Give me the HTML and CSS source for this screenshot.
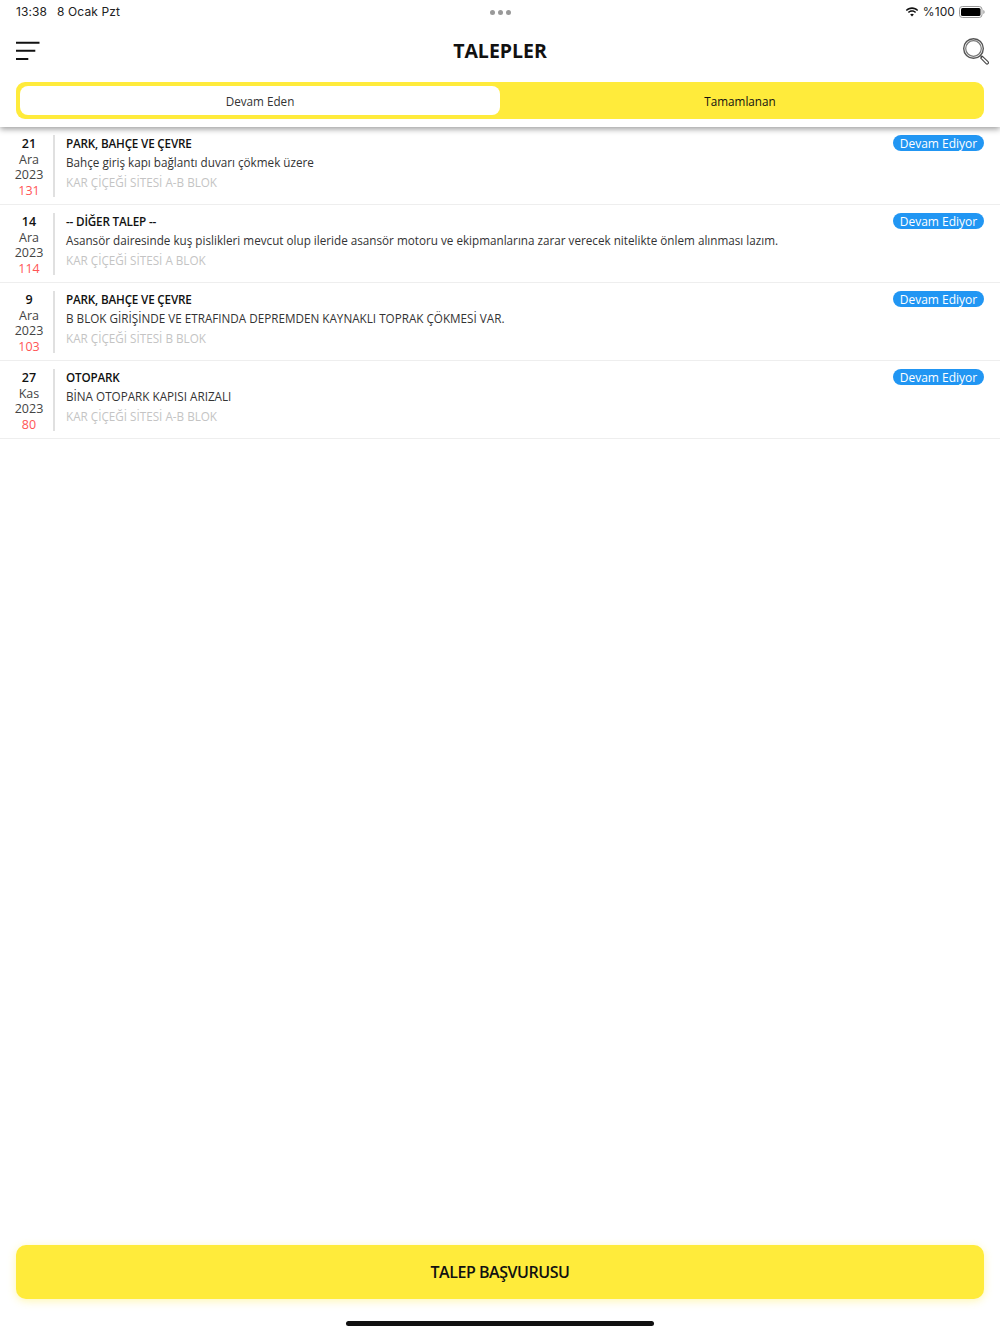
FILE: index.html
```html
<!DOCTYPE html>
<html lang="tr">
<head>
<meta charset="utf-8">
<title>Talepler</title>
<link rel="stylesheet" href="styles.css">
</head>
<body>
<div class="page">
  <div class="top">
    <div class="status">
      <div class="status-left"><span>13:38</span><span>8 Ocak Pzt</span></div>
      <div class="dots"><i></i><i></i><i></i></div>
      <div class="status-right">
        <svg class="wifi" width="14" height="10" viewBox="0 0 15 11"><path d="M7.500 2.200c2.200 0 4.200.9 5.700 2.300l1.100-1.200C12.500 1.500 10.100.4 7.500.4S2.500 1.500.7 3.300l1.100 1.200C3.300 3.100 5.300 2.200 7.500 2.200z"/><path d="M7.500 5.300c1.300 0 2.500.5 3.400 1.300l1.100-1.200C10.800 4.300 9.200 3.600 7.500 3.600s-3.300.7-4.500 1.800l1.100 1.200c.9-.8 2.100-1.300 3.400-1.300z"/><path d="M7.500 10.500l2-2.300c-.5-.5-1.200-.8-2-.8s-1.500.3-2 .8z"/></svg>
        <span class="pct">%100</span>
        <svg class="battery" width="26" height="12" viewBox="0 0 26 12"><rect x=".5" y=".5" width="22.500" height="11" rx="2.800" fill="none" stroke="#999"/><rect x="2" y="2" width="19.500" height="8" rx="1.500"/><path d="M24.300 4v4c.8-.3 1.300-1.100 1.300-2s-.5-1.700-1.300-2z" fill="#999"/></svg>
      </div>
    </div>
    <div class="nav">
      <svg class="menu" width="26" height="20" viewBox="0 0 26 20"><path d="M0 1.800h23.500M0 9.800h19.300M0 18h12.300" fill="none" stroke="#111" stroke-width="2"/></svg>
      <h1>TALEPLER</h1>
      <svg class="search" width="28" height="28" viewBox="0 0 28 28" fill="none"><circle cx="11.500" cy="11.500" r="9.800" stroke="#555" stroke-width="1.400"/><circle cx="11.500" cy="11.500" r="7.800" stroke="#777" stroke-width="1.200"/><path d="M18.500 18.500l2 2" stroke="#555" stroke-width="1.500"/><path d="M20.500 19.300l5.500 5.400a1.300 1.300 0 0 1-1.900 1.900l-5.400-5.500z" stroke="#444" stroke-width="1.100" fill="#fff"/></svg>
    </div>
    <div class="tabs">
      <div class="tab active">Devam Eden</div>
      <div class="tab">Tamamlanan</div>
    </div>
  </div>

  <div class="list">
    <div class="row">
      <div class="date"><b>21</b><span>Ara</span><span>2023</span><em>131</em></div>
      <div class="body">
        <div class="title-line"><div class="title">PARK, BAHÇE VE ÇEVRE</div><div class="badge">Devam Ediyor</div></div>
        <div class="desc">Bahçe giriş kapı bağlantı duvarı çökmek üzere</div>
        <div class="site">KAR ÇİÇEĞİ SİTESİ A-B BLOK</div>
      </div>
    </div>
    <div class="row">
      <div class="date"><b>14</b><span>Ara</span><span>2023</span><em>114</em></div>
      <div class="body">
        <div class="title-line"><div class="title">-- DİĞER TALEP --</div><div class="badge">Devam Ediyor</div></div>
        <div class="desc">Asansör dairesinde kuş pislikleri mevcut olup ileride asansör motoru ve ekipmanlarına zarar verecek nitelikte önlem alınması lazım.</div>
        <div class="site">KAR ÇİÇEĞİ SİTESİ A BLOK</div>
      </div>
    </div>
    <div class="row">
      <div class="date"><b>9</b><span>Ara</span><span>2023</span><em>103</em></div>
      <div class="body">
        <div class="title-line"><div class="title">PARK, BAHÇE VE ÇEVRE</div><div class="badge">Devam Ediyor</div></div>
        <div class="desc">B BLOK GİRİŞİNDE VE ETRAFINDA DEPREMDEN KAYNAKLI TOPRAK ÇÖKMESİ VAR.</div>
        <div class="site">KAR ÇİÇEĞİ SİTESİ B BLOK</div>
      </div>
    </div>
    <div class="row">
      <div class="date"><b>27</b><span>Kas</span><span>2023</span><em>80</em></div>
      <div class="body">
        <div class="title-line"><div class="title">OTOPARK</div><div class="badge">Devam Ediyor</div></div>
        <div class="desc">BİNA OTOPARK KAPISI ARIZALI</div>
        <div class="site">KAR ÇİÇEĞİ SİTESİ A-B BLOK</div>
      </div>
    </div>
  </div>

  <div class="footer">
    <div class="cta">TALEP BAŞVURUSU</div>
    <div class="home"></div>
  </div>
</div>
</body>
</html>
```
FILE: styles.css
```css
* { box-sizing: border-box; }
html, body { margin: 0; padding: 0; background: #fff; }
.page {
  width: 1000px;
  height: 1334px;
  display: flex;
  flex-direction: column;
  font-family: "Open Sans", "Noto Sans", sans-serif;
  color: #111;
  overflow: hidden;
}
.top {
  height: 127px;
  padding: 0 16px;
  background: #fff;
  box-shadow: 0 2px 6px rgba(0, 0, 0, .4);
  position: relative;
  flex: none;
}
.status {
  height: 24px;
  display: grid;
  grid-template-columns: 1fr auto 1fr;
  align-items: center;
  font-family: Inter, "Liberation Sans", sans-serif;
  font-size: 12px;
  letter-spacing: .1px;
  color: #222;
}
.status-left { display: flex; gap: 10px; margin-bottom: 2px; }
.status-right { display: flex; justify-content: flex-end; align-items: center; gap: 4px; margin-right: -1px; }
.pct { margin-bottom: 1px; }
.wifi { fill: #111; }
.battery { fill: #000; }
.dots { display: flex; gap: 3px; }
.dots i { width: 5px; height: 5px; border-radius: 50%; background: #999; }
.nav {
  height: 54px;
  display: grid;
  grid-template-columns: 1fr auto 1fr;
  align-items: center;
}
.nav h1 {
  margin: 0 0 2px;
  font-size: 19.500px;
  line-height: 27px;
  font-weight: 700;
  color: #111;
}
.menu { justify-self: start; }
.search { justify-self: end; margin-right: -6px; }
.tabs {
  height: 37px;
  margin-top: 4px;
  padding: 4px;
  display: flex;
  background: #ffeb3b;
  border-radius: 9px;
}
.tab {
  flex: 1;
  display: flex;
  align-items: center;
  justify-content: center;
  font-size: 11.700px;
  color: #111;
}
.tab.active {
  background: #fff;
  border-radius: 8px;
  color: #333;
}
.list { flex: 1; }
.row {
  height: 78px;
  padding: 8px 16px 0 0;
  display: flex;
  border-bottom: 1px solid #eee;
}
.date {
  width: 55px;
  height: 62px;
  flex: none;
  display: flex;
  flex-direction: column;
  align-items: center;
  padding: 1px 0 0 5px;
  border-right: 2px solid #e0e0e0;
  font-size: 12.500px;
  line-height: 15.600px;
  color: #444;
}
.date b { font-weight: 600; color: #111; }
.date span { display: block; }
.date em { font-style: normal; color: #f55; }
.body { flex: 1; padding-left: 11px; min-width: 0; }
.title-line { display: flex; justify-content: space-between; align-items: center; height: 16px; }
.title { font-size: 11.700px; line-height: 16px; font-weight: 600; color: #111; letter-spacing: -.18px; }
.badge {
  width: 91px;
  height: 16px;
  background: #2196f3;
  border-radius: 8px;
  color: #fff;
  font-size: 12px;
  line-height: 17px;
  text-align: center;
}
.desc { margin-top: 3px; font-size: 11.700px; line-height: 16px; color: #333; }
.site { margin-top: 4px; font-size: 11.700px; line-height: 16px; color: #c4c4c4; }
.footer {
  flex: none;
  padding: 0 16px;
  display: flex;
  flex-direction: column;
  align-items: center;
}
.cta {
  width: 100%;
  height: 54px;
  background: #ffeb3b;
  border-radius: 10px;
  box-shadow: 0 2px 8px rgba(255, 235, 59, .4);
  display: flex;
  align-items: center;
  justify-content: center;
  font-size: 16px;
  font-weight: 600;
  letter-spacing: -.45px;
  color: #111;
}
.home {
  width: 308px;
  height: 5px;
  margin: 22px 0 8px;
  border-radius: 3px;
  background: #111;
}
```
